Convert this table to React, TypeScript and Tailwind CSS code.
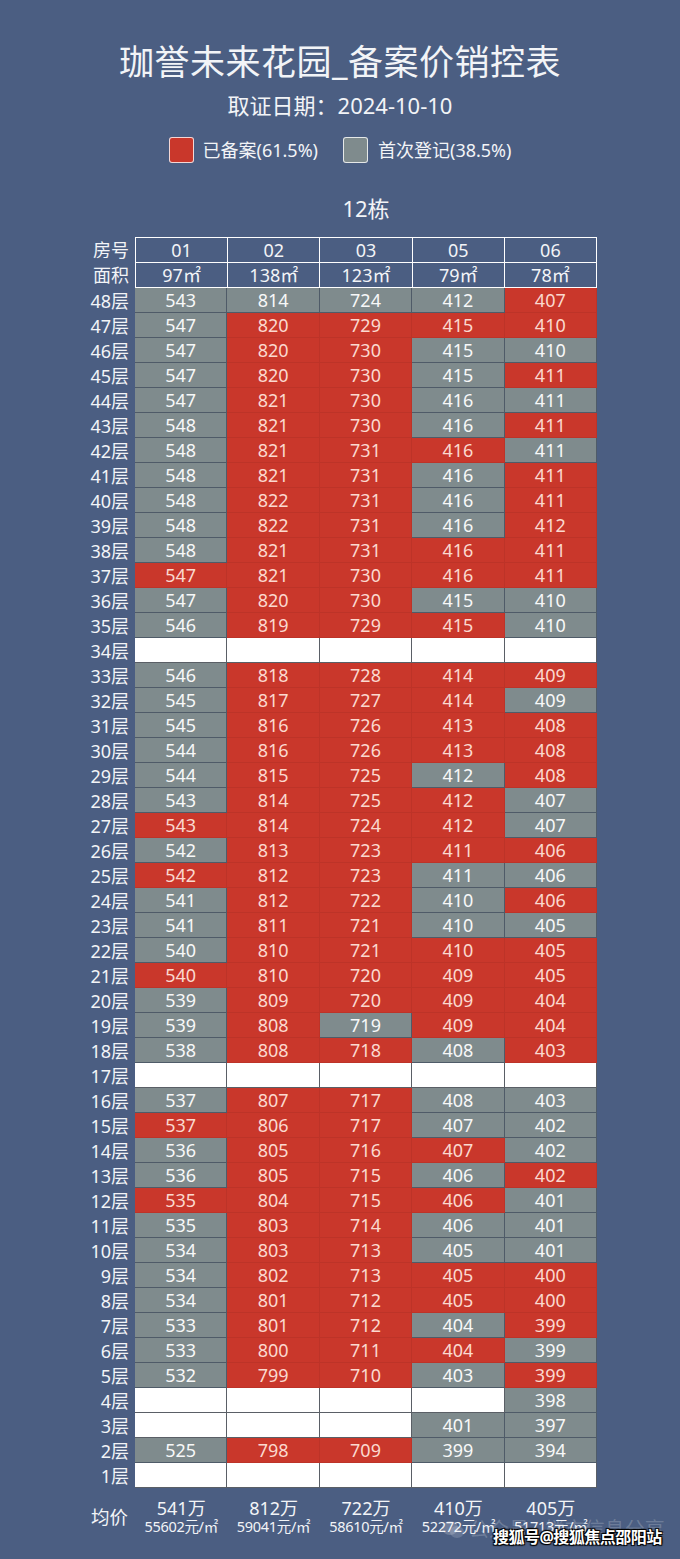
import React from "react";

const floors: [number, string][] = [
  [48, "543g 814g 724g 412g 407r"],
  [47, "547g 820r 729r 415r 410r"],
  [46, "547g 820r 730r 415g 410g"],
  [45, "547g 820r 730r 415g 411r"],
  [44, "547g 821r 730r 416g 411g"],
  [43, "548g 821r 730r 416g 411r"],
  [42, "548g 821r 731r 416r 411g"],
  [41, "548g 821r 731r 416g 411r"],
  [40, "548g 822r 731r 416g 411r"],
  [39, "548g 822r 731r 416g 412r"],
  [38, "548g 821r 731r 416r 411r"],
  [37, "547r 821r 730r 416r 411r"],
  [36, "547g 820r 730r 415g 410g"],
  [35, "546g 819r 729r 415r 410g"],
  [34, "- - - - -"],
  [33, "546g 818r 728r 414r 409r"],
  [32, "545g 817r 727r 414r 409g"],
  [31, "545g 816r 726r 413r 408r"],
  [30, "544g 816r 726r 413r 408r"],
  [29, "544g 815r 725r 412g 408r"],
  [28, "543g 814r 725r 412r 407g"],
  [27, "543r 814r 724r 412r 407g"],
  [26, "542g 813r 723r 411r 406r"],
  [25, "542r 812r 723r 411g 406g"],
  [24, "541g 812r 722r 410g 406r"],
  [23, "541g 811r 721r 410g 405g"],
  [22, "540g 810r 721r 410r 405r"],
  [21, "540r 810r 720r 409r 405r"],
  [20, "539g 809r 720r 409r 404r"],
  [19, "539g 808r 719g 409r 404r"],
  [18, "538g 808r 718r 408g 403r"],
  [17, "- - - - -"],
  [16, "537g 807r 717r 408g 403g"],
  [15, "537r 806r 717r 407g 402g"],
  [14, "536g 805r 716r 407r 402g"],
  [13, "536g 805r 715r 406g 402r"],
  [12, "535r 804r 715r 406r 401g"],
  [11, "535g 803r 714r 406g 401g"],
  [10, "534g 803r 713r 405g 401g"],
  [9, "534g 802r 713r 405r 400r"],
  [8, "534g 801r 712r 405r 400r"],
  [7, "533g 801r 712r 404g 399r"],
  [6, "533g 800r 711r 404r 399g"],
  [5, "532g 799r 710r 403g 399r"],
  [4, "- - - - 398g"],
  [3, "- - - 401g 397g"],
  [2, "525g 798r 709r 399g 394g"],
  [1, "- - - - -"],
];

const units = ["01", "02", "03", "05", "06"];
const areas = ["97㎡", "138㎡", "123㎡", "79㎡", "78㎡"];
const averages = [
  ["541万", "55602元/㎡"],
  ["812万", "59041元/㎡"],
  ["722万", "58610元/㎡"],
  ["410万", "52272元/㎡"],
  ["405万", "51713元/㎡"],
];

const cellStyle: Record<string, string> = {
  r: "bg-[#c9372b] border-[#bd3328] text-[#fbd9cf]",
  g: "bg-[#7f8b8d] border-[#4f5b68] text-[#f7f8f8]",
  w: "bg-white border-[#5a5f66] text-transparent",
};

function Cell({ token }: { token: string }) {
  const status = token === "-" ? "w" : token.slice(-1);
  const value = token === "-" ? "" : token.slice(0, -1);
  return (
    <div
      className={`flex h-full items-center justify-center border-r border-b text-[18px] leading-none ${cellStyle[status]}`}
    >
      {value}
    </div>
  );
}

export default function App() {
  return (
    <div className="relative h-[1559px] w-[680px] overflow-hidden bg-[#4b5e82] font-['Noto_Sans','Noto_Sans_CJK_SC',sans-serif] text-[#f2f4f7]">
      <div className="pt-[41px] text-center text-[35px] leading-[42px] tracking-[0.5px]">
        珈誉未来花园_备案价销控表
      </div>
      <div className="mt-[8px] text-center text-[22px] leading-[28px]">
        取证日期：2024-10-10
      </div>

      <div className="mt-[18px] flex h-[26px] items-center justify-center">
        <span className="h-[26px] w-[25px] rounded-[3px] border border-white/80 bg-[#c9372b]" />
        <span className="ml-[9px] text-[18px] leading-none">已备案(61.5%)</span>
        <span className="ml-[25px] h-[26px] w-[25px] rounded-[3px] border border-white/80 bg-[#7f8b8d]" />
        <span className="ml-[10px] text-[18px] leading-none">首次登记(38.5%)</span>
      </div>

      <div className="ml-[135px] mt-[31px] w-[462px] text-center text-[22px] leading-[28px]">
        12栋
      </div>

      <div className="ml-[80px] mt-[15px] w-[517px]">
        {/* header: room no. and area */}
        <div className="flex">
          <div className="w-[55px] pr-[6px] text-right text-[18px]">
            <div className="flex h-[25px] items-center justify-end leading-none">房号</div>
            <div className="flex h-[25px] items-center justify-end leading-none">面积</div>
          </div>
          <div className="grid w-[462px] grid-cols-5 border-t border-l border-white">
            {units.map((u) => (
              <div
                key={u}
                className="flex h-[25px] items-center justify-center border-r border-b border-white text-[18px] leading-none"
              >
                {u}
              </div>
            ))}
            {areas.map((a) => (
              <div
                key={a}
                className="flex h-[25px] items-center justify-center border-r border-b border-white text-[18px] leading-none"
              >
                {a}
              </div>
            ))}
          </div>
        </div>

        {floors.map(([floor, row]) => (
          <div key={floor} className="flex h-[25px]">
            <div className="flex w-[55px] items-center justify-end pr-[6px] text-[18px] leading-none">
              {floor}层
            </div>
            <div className="grid h-full w-[462px] grid-cols-5">
              {row.split(" ").map((t, i) => (
                <Cell key={i} token={t} />
              ))}
            </div>
          </div>
        ))}

        {/* averages */}
        <div className="mt-[11px] flex">
          <div className="flex w-[55px] items-center justify-end pr-[7px] text-[18.5px] leading-none">
            均价
          </div>
          <div className="grid w-[462px] grid-cols-5">
            {averages.map(([total, unit]) => (
              <div key={total} className="flex flex-col items-center">
                <span className="text-[18px] leading-[19px]">{total}</span>
                <span className="text-[14.5px] leading-[17px] tracking-[-0.3px] whitespace-nowrap">{unit}</span>
              </div>
            ))}
          </div>
        </div>
      </div>

      {/* watermarks */}
      <div className="absolute top-[1519px] left-[441px] flex items-center gap-[4px] text-[20px] leading-none text-white/20">
        <svg width="24" height="22" viewBox="0 0 24 22" fill="currentColor">
          <ellipse cx="9" cy="9" rx="8" ry="7" />
          <ellipse cx="16" cy="13" rx="7" ry="6" opacity="0.8" />
        </svg>
        <span>公众号 · 楼市信息分享</span>
      </div>
      <div className="absolute top-[1529px] left-[493px] text-[16px] font-bold leading-none tracking-[-0.5px] text-white [text-shadow:1px_1px_1px_#000,-1px_-1px_1px_#000,1px_-1px_1px_#000,-1px_1px_1px_#000]">
        搜狐号@搜狐焦点邵阳站
      </div>
    </div>
  );
}
